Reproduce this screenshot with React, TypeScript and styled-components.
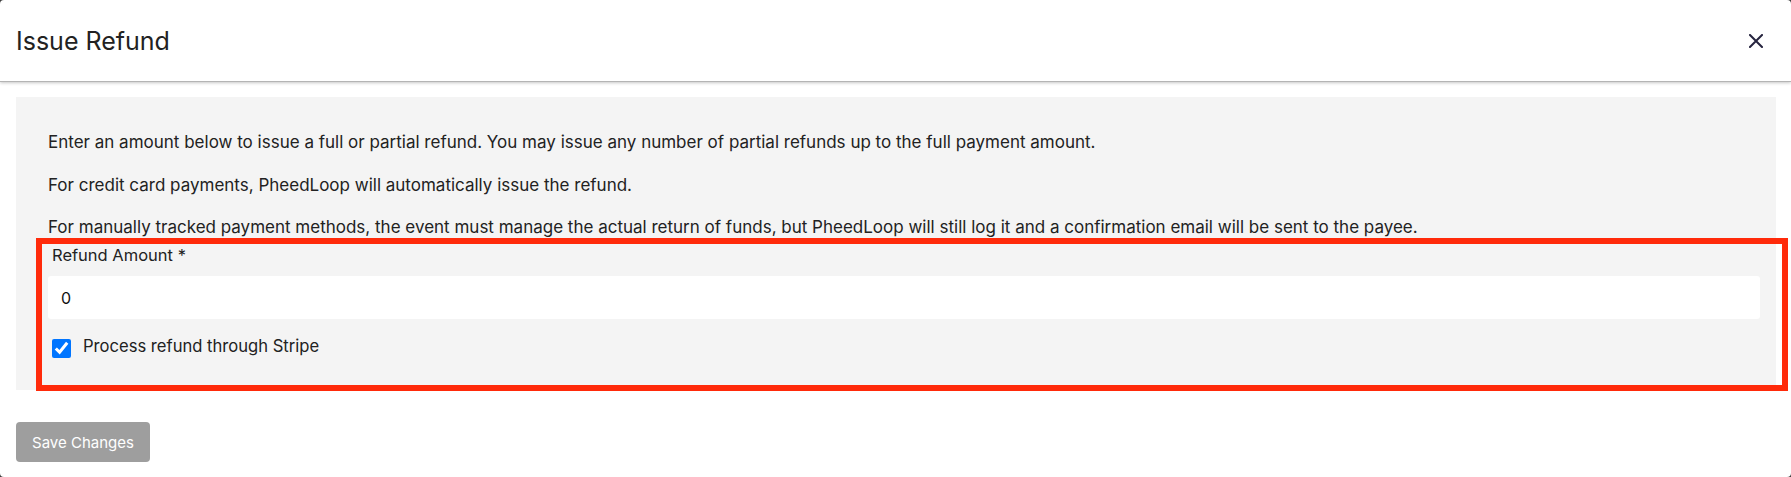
import React from "react";
import styled, { createGlobalStyle } from "styled-components";

const GlobalStyle = createGlobalStyle`
  html, body {
    margin: 0;
    padding: 0;
    background: #3c3c3c;
  }
  body {
    font-family: "Inter", "Open Sans", "Liberation Sans", sans-serif;
    color: #222;
  }
  * { box-sizing: border-box; }
`;

const Modal = styled.div`
  min-height: 100vh;
  background: #ffffff;
  border-radius: 4px;
  display: flex;
  flex-direction: column;
`;

const Header = styled.header`
  height: 82px;
  display: flex;
  align-items: center;
  justify-content: space-between;
  padding: 0 28px 0 16px;
  border-bottom: 1px solid #b4b4b4;
  box-shadow: 0 1px 3px rgba(0, 0, 0, 0.22);
  position: relative;
  z-index: 1;
`;

const Title = styled.h2`
  margin: 0;
  font-size: 25px;
  font-weight: 400;
  color: #222;
`;

const CloseButton = styled.button`
  width: 14px;
  height: 14px;
  padding: 0;
  border: none;
  background: none;
  display: flex;
  align-items: center;
  justify-content: center;
  cursor: pointer;
  color: #26243f;
`;

const Body = styled.div`
  padding: 15px 15px 0 16px;
`;

const Panel = styled.section`
  background: #f4f4f4;
  padding: 33px 16px 0 32px;
`;

const Paragraph = styled.p<{ $last?: boolean }>`
  margin: 0 0 ${(p) => (p.$last ? "4px" : "18.5px")};
  font-size: 17px;
  line-height: 24px;
  color: #222;
`;

const FormGroup = styled.div`
  position: relative;
  padding-bottom: 32px;

  &::after {
    content: "";
    position: absolute;
    top: -5px;
    bottom: -1px;
    left: -12px;
    right: -28px;
    border: 6px solid #ff2a0a;
    pointer-events: none;
  }
`;

const Label = styled.label`
  display: block;
  padding-left: 4px;
  margin-bottom: 9px;
  font-size: 16.5px;
  line-height: 24px;
  color: #222;
`;

const AmountInput = styled.input`
  display: block;
  width: 100%;
  height: 43px;
  border: none;
  border-radius: 3px;
  background: #ffffff;
  padding: 0 13px;
  font-family: inherit;
  font-size: 16px;
  color: #111;
  outline: none;
`;

const CheckRow = styled.label`
  display: flex;
  align-items: flex-start;
  gap: 12px;
  margin-top: 19px;
  padding-left: 4px;
  height: 20px;
  color: #222;
`;

const Checkbox = styled.input`
  width: 19px;
  height: 19px;
  margin: 0.5px 0 0;
  accent-color: #0075ff;
`;

const CheckText = styled.span`
  font-size: 16.6px;
  line-height: 20px;
  margin-top: -2.5px;
`;

const Footer = styled.div`
  padding: 32px 16px 0;
`;

const SaveButton = styled.button`
  width: 134px;
  height: 40px;
  border: none;
  border-radius: 4px;
  background: #9e9e9e;
  color: #ffffff;
  font-family: inherit;
  font-size: 15px;
  font-weight: 400;
  cursor: pointer;
`;

export default function App() {
  return (
    <>
      <GlobalStyle />
      <Modal>
        <Header>
          <Title>Issue Refund</Title>
          <CloseButton aria-label="Close">
            <svg width="14" height="14" viewBox="0 0 14 14" fill="none">
              <path d="M1 1L13 13M13 1L1 13" stroke="currentColor" strokeWidth="2" strokeLinecap="square" />
            </svg>
          </CloseButton>
        </Header>
        <Body>
          <Panel>
            <Paragraph>
              Enter an amount below to issue a full or partial refund. You may issue any number of partial refunds up to the full payment amount.
            </Paragraph>
            <Paragraph>For credit card payments, PheedLoop will automatically issue the refund.</Paragraph>
            <Paragraph $last>
              For manually tracked payment methods, the event must manage the actual return of funds, but PheedLoop will still log it and a confirmation email will be sent to the payee.
            </Paragraph>
            <FormGroup>
              <Label htmlFor="refund-amount">Refund Amount *</Label>
              <AmountInput id="refund-amount" type="text" defaultValue="0" />
              <CheckRow>
                <Checkbox type="checkbox" defaultChecked />
                <CheckText>Process refund through Stripe</CheckText>
              </CheckRow>
            </FormGroup>
          </Panel>
        </Body>
        <Footer>
          <SaveButton>Save Changes</SaveButton>
        </Footer>
      </Modal>
    </>
  );
}
